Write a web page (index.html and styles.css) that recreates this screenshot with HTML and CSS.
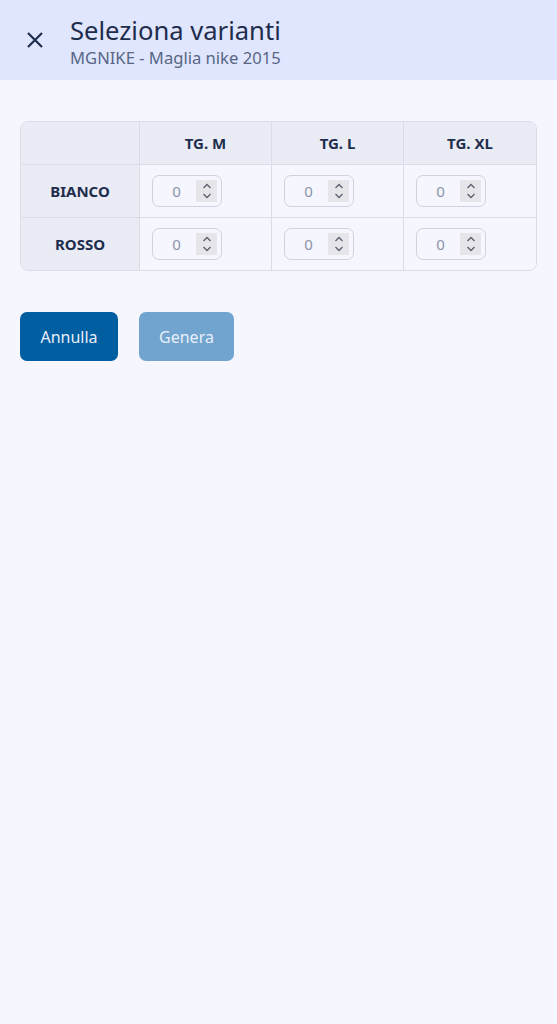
FILE: index.html
```html
<!DOCTYPE html>
<html lang="it">
<head>
  <meta charset="UTF-8">
  <meta name="viewport" content="width=device-width, initial-scale=1.0">
  <title>Seleziona varianti</title>
  <link rel="stylesheet" href="styles.css">
</head>
<body>
  <header class="topbar">
    <button class="close-btn" aria-label="Chiudi">
      <svg width="20" height="20" viewBox="0 0 20 20"><path d="M3 3 L17 17 M17 3 L3 17" stroke="#1f2d4d" stroke-width="2.2" stroke-linecap="butt"/></svg>
    </button>
    <div class="titles">
      <h1>Seleziona varianti</h1>
      <p>MGNIKE - Maglia nike 2015</p>
    </div>
  </header>

  <main class="content">
    <table class="grid">
      <thead>
        <tr>
          <th class="corner"></th>
          <th>TG. M</th>
          <th>TG. L</th>
          <th>TG. XL</th>
        </tr>
      </thead>
      <tbody>
        <tr>
          <th>BIANCO</th>
          <td><div class="qty"><span>0</span><i class="spin"></i></div></td>
          <td><div class="qty"><span>0</span><i class="spin"></i></div></td>
          <td><div class="qty"><span>0</span><i class="spin"></i></div></td>
        </tr>
        <tr>
          <th>ROSSO</th>
          <td><div class="qty"><span>0</span><i class="spin"></i></div></td>
          <td><div class="qty"><span>0</span><i class="spin"></i></div></td>
          <td><div class="qty"><span>0</span><i class="spin"></i></div></td>
        </tr>
      </tbody>
    </table>

    <div class="actions">
      <button class="btn primary">Annulla</button>
      <button class="btn disabled">Genera</button>
    </div>
  </main>

  <script>
    // frecce dello spinner disegnate una volta sola
    const arrows = '<svg width="12" height="22" viewBox="0 0 12 22"><path d="M2.5 8 L6 4.5 L9.5 8 M2.5 14 L6 17.5 L9.5 14" fill="none" stroke="#5b6070" stroke-width="1.3"/></svg>';
    document.querySelectorAll('.spin').forEach(el => el.innerHTML = arrows);
  </script>
</body>
</html>
```

FILE: styles.css
```css
body {
  margin: 0;
  font-family: 'Noto Sans', 'Open Sans', sans-serif;
  background-color: #f5f6fe;
  color: #1f2d4d;
  min-height: 1024px;
}

.topbar {
  display: flex;
  align-items: center;
  height: 80px;
  background-color: #dfe6fd;
  box-sizing: border-box;
  padding: 4px 0 0 20px;
}

.close-btn {
  width: 30px;
  height: 30px;
  padding: 0;
  margin: -4px 20px 0 0;
  border: none;
  background: none;
  display: flex;
  align-items: center;
  justify-content: center;
}

.titles h1 {
  margin: 0;
  font-size: 25.6px;
  font-weight: 400;
  line-height: 30px;
  color: #1f2d4d;
}

.titles p {
  margin: 2px 0 0;
  font-size: 16.6px;
  line-height: 20px;
  color: #586684;
}

.content {
  padding: 41px 20px;
}

.grid {
  width: 100%;
  border-collapse: separate;
  border-spacing: 0;
  border: 1px solid #dadde8;
  border-radius: 8px;
  overflow: hidden;
  table-layout: fixed;
}

.grid th, .grid td {
  border-right: 1px solid #dadde8;
  border-bottom: 1px solid #dadde8;
  padding: 0;
  text-align: center;
}

.grid tr > :last-child {
  border-right: none;
}

.grid tbody tr:last-child > * {
  border-bottom: none;
}

.grid thead th {
  height: 42px;
  background-color: #e9ebf5;
  font-size: 15px;
  font-weight: 700;
  color: #1f2d4d;
}

.grid .corner {
  width: 118px;
}

.grid tbody th {
  height: 52px;
  background-color: #e9ebf5;
  font-size: 15px;
  font-weight: 700;
}

.grid tbody td {
  background-color: #f5f6fe;
  text-align: left;
  padding-left: 12px;
}

.qty {
  width: 70px;
  height: 32px;
  box-sizing: border-box;
  border: 1px solid #cfd3de;
  border-radius: 7px;
  display: flex;
  align-items: center;
  padding: 0 4px 0 0;
}

.qty span {
  flex: 1;
  text-align: center;
  padding-left: 4px;
  font-size: 15px;
  color: #8b93a8;
}

.spin {
  width: 21px;
  height: 22px;
  background-color: #e6e6ea;
  display: flex;
  align-items: center;
  justify-content: center;
}

.actions {
  display: flex;
  gap: 21px;
  margin-top: 41px;
}

.btn {
  height: 49px;
  padding: 0 20px;
  border: none;
  border-radius: 7px;
  font-family: inherit;
  font-size: 16px;
  color: #e8effa;
}

.btn.primary {
  width: 98px;
  background-color: #005ea1;
}

.btn.disabled {
  width: 95px;
  background-color: #71a4ce;
}
```
